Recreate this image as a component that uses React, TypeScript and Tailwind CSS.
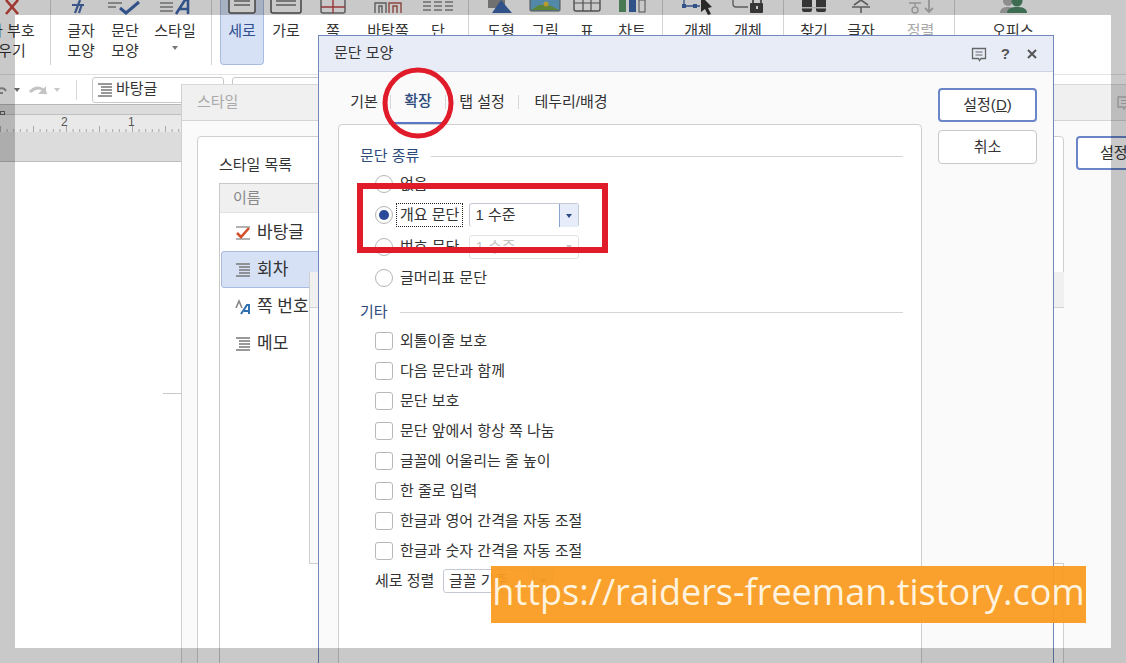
const FONT = "font-['Liberation_Sans','Noto_Sans_CJK_KR',sans-serif]";

type RibbonItem = {
  lines: string[];
  width: string;
  icon: React.ReactNode;
  caret?: boolean;
  active?: boolean;
  muted?: boolean;
};

const Sep = () => <div className="w-px h-[65px] bg-[#d4d4d4] shrink-0" />;

const Page = ({ w = 26 }: { w?: number }) => (
  <svg width="36" height="15" viewBox="0 0 36 15" fill="none">
    <rect x={18 - w / 2} y="-8" width={w} height="21" rx="2" fill="#fff" stroke="#555" strokeWidth="1.5" />
    <path d={`M${18 - w / 2 + 5} 1h${w - 10}M${18 - w / 2 + 5} 5h${w - 10}`} stroke="#777" strokeWidth="1.3" />
  </svg>
);

const groups: RibbonItem[][] = [
  [
    { lines: ['글자', '모양'], width: 'w-[44px]', icon: <svg width="30" height="15" fill="none"><path d="M9 13L14 0M16 4L13 13M6 5h12" stroke="#4a6db0" strokeWidth="2.2" /></svg> },
    { lines: ['문단', '모양'], width: 'w-[44px]', icon: <svg width="36" height="15" fill="none"><path d="M1 3h14M1 7h8" stroke="#8a8a8a" strokeWidth="1.5" /><path d="M13 8l6 5 13-11" stroke="#3f68ad" strokeWidth="3" /></svg> },
    { lines: ['스타일'], width: 'w-[56px]', caret: true, icon: <svg width="34" height="15" fill="none"><path d="M2 3h13M2 7h13M2 11h13" stroke="#8a8a8a" strokeWidth="1.4" /><path d="M18 14L27 0h3v14M21 9h9" stroke="#3f68ad" strokeWidth="2.6" /></svg> },
  ],
  [
    { lines: ['세로'], width: 'w-[44px]', active: true, icon: <Page /> },
    { lines: ['가로'], width: 'w-[44px]', icon: <Page w={30} /> },
    { lines: ['쪽'], width: 'w-[50px]', icon: <svg width="28" height="15" fill="none"><rect x="2" y="-8" width="24" height="21" rx="2" fill="#fff" stroke="#777" strokeWidth="1.5" /><path d="M2 7h24M14 -8v21" stroke="#c0474a" strokeWidth="1.4" /></svg> },
    { lines: ['바탕쪽'], width: 'w-[60px]', icon: <svg width="30" height="15" fill="none"><path d="M2 13V3h11v10M6 13V6h3v7" stroke="#777" strokeWidth="1.4" /><path d="M16 13V3h12v10M20 13V6h4v7" stroke="#b05a50" strokeWidth="1.4" /></svg> },
    { lines: ['단'], width: 'w-[40px]', icon: <svg width="32" height="15" fill="none"><path d="M1 2h8M1 6h8M1 10h8M12 2h8M12 6h8M12 10h8M23 2h8M23 6h8M23 10h8" stroke="#8a8a8a" strokeWidth="1.5" /></svg> },
  ],
  [
    { lines: ['도형'], width: 'w-[44px]', icon: <svg width="28" height="15"><rect x="1" y="-4" width="17" height="12" fill="#8f8f8f" /><path d="M14 0L25 13H5z" fill="#3f68ad" /></svg> },
    { lines: ['그림'], width: 'w-[44px]', icon: <svg width="32" height="15"><rect x="1" y="-6" width="30" height="17" rx="1" fill="#6aaed6" stroke="#666" /><path d="M2 10l8-5h10l10 5z" fill="#78a848" /><circle cx="17" cy="4" r="2.5" fill="#e7c43c" /></svg> },
    { lines: ['표'], width: 'w-[40px]', icon: <svg width="30" height="15" fill="none"><rect x="2" y="-6" width="26" height="17" rx="2" fill="#fff" stroke="#666" strokeWidth="1.4" /><path d="M2 3h26M11 -6v17M19 -6v17" stroke="#666" strokeWidth="1.2" /></svg> },
    { lines: ['차트'], width: 'w-[50px]', icon: <svg width="30" height="15"><rect x="2" y="-4" width="7" height="16" fill="#5c9a6a" /><rect x="12" y="-2" width="7" height="14" fill="#3f68ad" /><rect x="22" y="0" width="6" height="12" fill="#fff" stroke="#666" /></svg> },
  ],
  [
    { lines: ['개체'], width: 'w-[50px]', icon: <svg width="34" height="15" fill="none"><path d="M3 -3v9h16" stroke="#3f68ad" strokeWidth="1.3" /><rect x="1" y="4" width="4" height="4" fill="#3f68ad" /><rect x="12" y="4" width="4" height="4" fill="#3f68ad" /><path d="M20 -4l11 11-4 1 3 6-3 1-3-6-4 3z" fill="#333" /></svg> },
    { lines: ['개체'], width: 'w-[50px]', icon: <svg width="34" height="15" fill="none"><path d="M2 -2v6a3 3 0 003 3h12" stroke="#777" strokeWidth="1.4" /><path d="M22 4v-4a4 4 0 018 0v4" stroke="#444" strokeWidth="1.6" /><rect x="19" y="3" width="13" height="10" rx="1" fill="#444" /><rect x="25" y="6" width="2" height="3" fill="#fff" /></svg> },
  ],
  [
    { lines: ['찾기'], width: 'w-[42px]', icon: <svg width="28" height="15"><rect x="2" y="-4" width="10" height="16" rx="2" fill="#444" /><rect x="16" y="-4" width="10" height="16" rx="2" fill="#444" /><rect x="2" y="7" width="24" height="1.5" fill="#ddd" /></svg> },
    { lines: ['글자'], width: 'w-[52px]', icon: <svg width="20" height="15" fill="none"><path d="M10 0L3 5M10 0l7 5M1 7h18M10 7v6" stroke="#777" strokeWidth="1.6" /></svg> },
    { lines: ['정렬'], width: 'w-[67px]', muted: true, icon: <svg width="28" height="15" fill="none"><path d="M2 3h12M8 3v3" stroke="#bbb" strokeWidth="1.4" /><circle cx="8" cy="10" r="3" stroke="#bbb" strokeWidth="1.4" /><path d="M22 0v11M18 8l4 4 4-4" stroke="#bbb" strokeWidth="1.8" /></svg> },
  ],
  [
    { lines: ['오피스'], width: 'w-[116px]', icon: <svg width="30" height="15"><circle cx="10" cy="1" r="5" fill="#b5b5b5" /><path d="M2 13c0-5 4-6 8-6s6 2 6 6z" fill="#b5b5b5" /><circle cx="19" cy="1" r="5.5" fill="#4f8a68" /><path d="M9 13c0-5 5-6 10-6s10 1 10 6z" fill="#4f8a68" /></svg> },
  ],
];

const spacers = ['pl-[8px] pr-[8px]', 'pl-[8px] pr-[10px]', 'pl-[10px] pr-[5px]', 'pl-[10px] pr-[10px]', 'pl-[9px]', ''];

function Ribbon() {
  return (
    <div className="h-[75px] border-b border-[#e4e4e4] flex text-[15px] leading-[20px] text-[#333]">
      <div className="w-[50px] shrink-0">
        <div className="h-[21px] flex justify-center items-start pr-[26px]">
          <svg width="18" height="15" fill="none"><path d="M3 0l12 14M15 0L3 14" stroke="#c9473f" strokeWidth="2.6" /></svg>
        </div>
        <div className="w-[100px] ml-[-45px] whitespace-nowrap text-center">
          <div>글자 부호</div>
          <div>지우기</div>
        </div>
      </div>
      <Sep />
      {groups.map((items, g) => (
        <div key={g} className="flex shrink-0">
          <div className={`flex ${spacers[g]}`}>
            {items.map((item, i) => (
              <div
                key={i}
                className={`${item.width} h-[65px] shrink-0 flex flex-col items-center rounded-b-[4px] ${item.active ? 'bg-[#d6e1f6] border border-t-0 border-[#a9bce0]' : ''} ${item.muted ? 'text-[#a8a8a8]' : ''} ${item.active ? 'text-[#2f4f8f]' : ''}`}
              >
                <div className="h-[21px] flex items-start">{item.icon}</div>
                {item.lines.map((line) => (
                  <div key={line} className="whitespace-nowrap">{line}</div>
                ))}
                {item.caret && <div className="mt-[5px] border-x-[3px] border-t-[4px] border-x-transparent border-t-[#777]" />}
              </div>
            ))}
          </div>
          {g < groups.length - 1 && <Sep />}
        </div>
      ))}
    </div>
  );
}

const ParaIcon = ({ color = '#777' }: { color?: string }) => (
  <svg width="16" height="16" fill="none" className="shrink-0">
    <path d="M1 2h14M4 5h11M4 8h11M4 11h11M1 14h14" stroke={color} strokeWidth="1.5" />
  </svg>
);

function Toolbar() {
  return (
    <div className="h-[30px] border-b border-[#b8b8b8] flex items-center text-[#333]">
      <svg width="14" height="14" fill="none" className="ml-[-6px]"><path d="M2 10c2-6 8-6 10-2M2 3v7h7" stroke="#999" strokeWidth="2" /></svg>
      <div className="ml-[6px] border-x-[3px] border-t-[4px] border-x-transparent border-t-[#666]" />
      <svg width="20" height="14" fill="none" className="ml-[8px]"><path d="M18 11C15 4 8 3 2 9" stroke="#c4c4c4" strokeWidth="3" /><path d="M18 3v8h-8z" fill="#c4c4c4" /></svg>
      <div className="ml-[6px] border-x-[3px] border-t-[4px] border-x-transparent border-t-[#c8c8c8]" />
      <div className="ml-[16px] w-px h-[20px] bg-[#d8d8d8]" />
      <div className="ml-[15px] w-[132px] h-[26px] border border-[#c8c8c8] rounded-[3px] flex items-center gap-[3px] pl-[4px] text-[15px]">
        <ParaIcon />
        바탕글
      </div>
      <div className="ml-[8px] w-[100px] h-[26px] border border-[#c8c8c8] rounded-[3px]" />
    </div>
  );
}

function Ruler() {
  const ticks = Array.from({ length: 28 }, (_, i) => i);
  return (
    <div className="h-[57px] bg-[#dcdcdc] border-b border-[#bdbdbd] relative">
      <div className="h-[10px] border-b border-[#c0c0c0]" />
      <div className="h-[17px] bg-[#e9e9e9] relative">
        <svg width="185" height="17" className="absolute left-0 top-0">
          {ticks.map((i) => (
            <line key={i} x1={i * 6.6 + 0.5} x2={i * 6.6 + 0.5} y1={i % 5 === 0 ? 11 : 14} y2="17" stroke="#a8a8a8" />
          ))}
        </svg>
        <span className="absolute left-[61px] top-0 text-[12px] leading-[15px] text-[#555]">2</span>
        <span className="absolute left-[128px] top-0 text-[12px] leading-[15px] text-[#555]">1</span>
      </div>
      <div className="absolute left-0 top-[6px] w-[5px] h-[4px] border border-[#666]" />
    </div>
  );
}

function StyleWindow() {
  const rows = [
    { label: '바탕글', icon: <svg width="16" height="16" fill="none" className="shrink-0"><path d="M1 2h14M1 14h14" stroke="#999" strokeWidth="1.5" /><path d="M2 8l4 4 8-9" stroke="#d4502c" strokeWidth="2.6" /></svg> },
    { label: '회차', icon: <ParaIcon />, active: true },
    { label: '쪽 번호', icon: <svg width="16" height="16" fill="none" className="shrink-0"><path d="M1 9l3-7 3 7" stroke="#888" strokeWidth="1.6" /><path d="M6 15l6-9h2v9M9 12h5" stroke="#2f6fb0" strokeWidth="2" /></svg> },
    { label: '메모', icon: <ParaIcon /> },
  ];
  return (
    <div className="absolute left-[181px] top-[84px] w-[960px] h-[600px] bg-[#fafafa] border-l border-[#cfcfcf] border-t border-t-[#d8d8d8] text-[#333]">
      <div className="h-[36px] bg-[#f0f0f0] border-b border-[#d4d4d4] flex items-center justify-between pl-[15px] pr-[14px] text-[15px] text-[#aaa]">
        <span>스타일</span>
        <svg width="16" height="16" fill="none" className="mr-[-5px]"><path d="M2 2h12v10H9l-1 2-1-2H2z" stroke="#bbb" strokeWidth="1.4" /><path d="M5 5.500h6M5 8.500h6" stroke="#bbb" /></svg>
      </div>
      <div className="flex pl-[15px] pt-[15px] gap-[12px]">
        <div className="w-[867px] h-[560px] shrink-0 bg-white border border-[#cfcfcf] rounded-[4px] pl-[21px] pt-[18px]">
          <div className="text-[15px] leading-[20px]">스타일 목록</div>
          <div className="mt-[8px] w-[400px] h-[500px] border-l border-t border-[#c8c8c8]">
            <div className="h-[29px] bg-[#f0f0f0] border-b border-[#e2e2e2] pl-[13px] text-[15px] leading-[28px] text-[#888]">이름</div>
            <div className="pt-[1px] pl-[1px] flex flex-col">
              {rows.map((row) => (
                <div
                  key={row.label}
                  className={`h-[37px] flex items-center gap-[6px] pl-[13px] text-[17px] whitespace-nowrap rounded-[3px] border ${row.active ? 'bg-[#d6e1f6] border-[#a9bce0]' : 'border-transparent'}`}
                >
                  {row.icon}
                  {row.label}
                </div>
              ))}
            </div>
          </div>
        </div>
        <div className="w-[70px] h-[34px] shrink-0 bg-white border-[2px] border-[#6a85c8] rounded-[4px] text-[15px] leading-[30px] pl-[22px] whitespace-nowrap">설정</div>
      </div>
      {/* window behind the paragraph dialog */}
      <div className="absolute left-[127px] top-[187px] w-[755px] h-[292px] bg-[#fafafa] border-l border-b border-[#cfcfcf]">
        <div className="h-[36px] bg-[#f0f0f0] border-b border-[#d4d4d4]" />
      </div>
    </div>
  );
}

const Caret = ({ color }: { color: string }) => (
  <div className={`border-x-[3.5px] border-t-[4px] border-x-transparent ${color}`} />
);

function Select({ disabled, label, className }: { disabled?: boolean; label: string; className?: string }) {
  return (
    <div className={`w-[110px] h-[24px] flex rounded-[3px] border ${disabled ? 'border-[#e2e2e2] text-[#c4c4c4]' : 'border-[#c4c9d4]'} ${className ?? ''}`}>
      <div className="flex-1 pl-[5px] leading-[22px] whitespace-nowrap overflow-hidden">{label}</div>
      <div className={`w-[19px] flex items-center justify-center ${disabled ? '' : 'bg-[#e6ecf9] border-l border-[#8da3cf]'}`}>
        <Caret color={disabled ? 'border-t-[#c8c8c8]' : 'border-t-[#2c4a86]'} />
      </div>
    </div>
  );
}

const Radio = ({ checked }: { checked?: boolean }) => (
  <div className="w-[18px] h-[18px] rounded-full border border-[#b4b4b4] bg-white flex items-center justify-center shrink-0">
    {checked && <div className="w-[10px] h-[10px] rounded-full bg-[#2c4a9a]" />}
  </div>
);

const Heading = ({ label, className }: { label: string; className?: string }) => (
  <div className={`h-[20px] flex items-center gap-[12px] text-[15px] text-[#2d4a7c] ${className ?? ''}`}>
    <span className="whitespace-nowrap">{label}</span>
    <div className="flex-1 h-px bg-[#d4d4d4]" />
  </div>
);

function RadioRow({ label, checked, focused, children }: { label: string; checked?: boolean; focused?: boolean; children?: React.ReactNode }) {
  return (
    <div className="h-[31.5px] flex items-center ml-[15px]">
      <Radio checked={checked} />
      <div className={`ml-[3px] h-[24px] px-[3px] leading-[22px] whitespace-nowrap border ${focused ? 'border-dotted border-[#222]' : 'border-transparent'}`}>
        {label}
      </div>
      {children}
    </div>
  );
}

const checks = [
  '외톨이줄 보호',
  '다음 문단과 함께',
  '문단 보호',
  '문단 앞에서 항상 쪽 나눔',
  '글꼴에 어울리는 줄 높이',
  '한 줄로 입력',
  '한글과 영어 간격을 자동 조절',
  '한글과 숫자 간격을 자동 조절',
];

function ParagraphDialog() {
  return (
    <div className="absolute left-[318px] top-[35px] w-[736px] h-[640px] bg-[#fafafa] border border-[#7088bb] text-[15px] text-[#333]">
      <div className="h-[36px] bg-[#e8ecf7] border-b border-[#ccd3e4] flex items-center justify-between pl-[15px] pr-[15px]">
        <span>문단 모양</span>
        <div className="flex items-center gap-[14px] text-[#555]">
          <svg width="16" height="16" fill="none"><path d="M1.500 2.500h13v10H10l-1.500 2-1-2h-6z" stroke="#666" strokeWidth="1.3" /><path d="M4.500 6h7M4.500 9h7" stroke="#666" /></svg>
          <span className="font-bold leading-none text-[15px]">?</span>
          <svg width="12" height="12" fill="none" className="ml-[2px]"><path d="M2 2l8 8M10 2l-8 8" stroke="#555" strokeWidth="2" /></svg>
        </div>
      </div>
      <div className="flex pl-[19px]">
        <div className="w-[584px] shrink-0">
          <div className="h-[52px] flex items-end">
            <div className="w-[52px] h-[43px] flex items-center justify-center">기본</div>
            <div className="w-px h-[14px] bg-[#d8d8d8] mb-[15px]" />
            <div className="w-[54px] h-[43px] flex items-center justify-center font-medium text-[#2d4a7c] border-b-[2px] border-[#5b78c7]">확장</div>
            <div className="w-px h-[14px] bg-[#d8d8d8] mb-[15px]" />
            <div className="w-[72px] h-[43px] flex items-center justify-center">탭 설정</div>
            <div className="w-px h-[14px] bg-[#d8d8d8] mb-[15px]" />
            <div className="w-[104px] h-[43px] flex items-center justify-center">테두리/배경</div>
          </div>
          <div className="h-[560px] bg-white border border-[#cfcfcf] rounded-t-[4px] pl-[21px] pr-[18px] pt-[21px]">
            <Heading label="문단 종류" />
            <div className="mt-[2px]">
              <RadioRow label="없음" />
              <RadioRow label="개요 문단" checked focused>
                <Select label="1 수준" className="ml-[6px] border-b-0" />
              </RadioRow>
              <RadioRow label="번호 문단">
                <Select label="1 수준" disabled className="ml-[6px]" />
              </RadioRow>
              <RadioRow label="글머리표 문단" />
            </div>
            <Heading label="기타" className="mt-[8px]" />
            <div className="mt-[4px] ml-[15px]">
              {checks.map((label) => (
                <div key={label} className="h-[30px] flex items-center gap-[7px]">
                  <div className="w-[18px] h-[18px] bg-white border border-[#b8b8b8] rounded-[3px] shrink-0" />
                  <span className="whitespace-nowrap">{label}</span>
                </div>
              ))}
              <div className="h-[30px] flex items-center">
                <span className="whitespace-nowrap w-[68px]">세로 정렬</span>
                <Select label="글꼴 기준" />
              </div>
            </div>
          </div>
        </div>
        <div className="ml-[16px] pt-[16px] w-[99px] flex flex-col gap-[8px]">
          <div className="h-[34px] bg-white border-[2px] border-[#6a85c8] rounded-[4px] flex items-center justify-center">
            <span>설정(<span className="underline">D</span>)</span>
          </div>
          <div className="h-[34px] bg-white border border-[#c8c8c8] rounded-[4px] flex items-center justify-center">취소</div>
        </div>
      </div>
    </div>
  );
}

export default function App() {
  return (
    <div className={`relative w-[1126px] h-[663px] overflow-hidden bg-white ${FONT}`}>
      <Ribbon />
      <Toolbar />
      <Ruler />
      <div className="absolute left-[163px] top-[393px] w-[18px] h-px bg-[#c8c8c8]" />
      <StyleWindow />
      <ParagraphDialog />

      {/* annotations */}
      <div className="absolute left-[357px] top-[183px] w-[251px] h-[70px] border-[6px] border-[#e01b2a]" />
      <svg width="76" height="76" className="absolute left-[380px] top-[65px]" fill="none">
        <ellipse cx="38" cy="38" rx="33" ry="33" stroke="#e01b2a" strokeWidth="5" />
      </svg>
      <div className="absolute left-[491px] top-[566px] w-[595px] h-[57px] pb-[6px] bg-[#f99c21]/95 flex items-center justify-center text-[36px] text-[#fff3df] whitespace-nowrap font-['Open_Sans',sans-serif]">
        https://raiders-freeman.tistory.com
      </div>

      {/* grey frame around the capture */}
      <div className="absolute inset-0 border-[15px] border-black/[0.21]" />
    </div>
  );
}
